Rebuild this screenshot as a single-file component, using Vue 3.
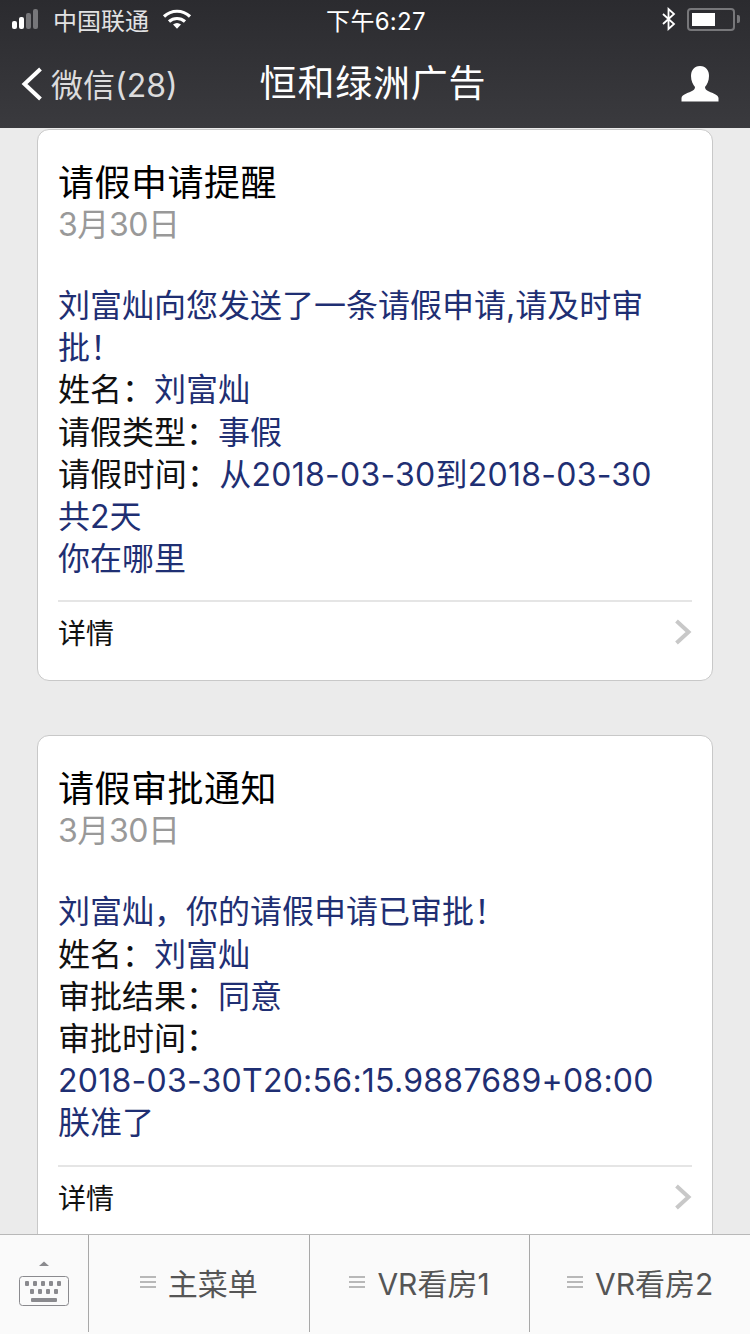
<template>
  <div class="page">
    <header class="topbar">
      <div class="status">
        <div class="status-left">
          <div class="signal">
            <i class="on"></i><i class="on"></i><i></i><i></i>
          </div>
          <span class="carrier">中国联通</span>
          <svg class="wifi" width="30" height="22" viewBox="0 0 30 22">
            <path d="M2 8.5C9.5 1.5 20.5 1.5 28 8.500" fill="none" stroke="#fff" stroke-width="3.200" />
            <path d="M7 13.500C11.500 9.500 18.500 9.500 23 13.500" fill="none" stroke="#fff" stroke-width="3.200" />
            <path d="M11 16.500C13.500 14.500 16.500 14.500 19 16.500L15 20.800Z" fill="#fff" />
          </svg>
        </div>
        <div class="clock">下午6:27</div>
        <div class="status-right">
          <svg width="16" height="24" viewBox="0 0 16 24">
            <path d="M2 7L13 17L7.500 22V2L13 7L2 17" fill="none" stroke="#fff" stroke-width="1.800" />
          </svg>
          <div class="battery"><div class="battery-level"></div></div>
          <div class="battery-cap"></div>
        </div>
      </div>
      <div class="navbar">
        <div class="back">
          <svg width="24" height="36" viewBox="0 0 24 36">
            <path d="M20.500 3L4.500 18L20.500 33" fill="none" stroke="#fff" stroke-width="4" />
          </svg>
          <span>微信(28)</span>
        </div>
        <div class="title">恒和绿洲广告</div>
        <svg class="person" width="38" height="36" viewBox="0 0 38 36">
          <path
            d="M19 0C25 0 28 4.500 28 10C28 15 26 18.500 24 21C24 23 25 24 28 25.500C32 27.500 37 28.500 37.500 32V35.500H0.500V32C1 28.500 6 27.500 10 25.500C13 24 14 23 14 21C12 18.500 10 15 10 10C10 4.500 13 0 19 0Z"
            fill="#fff"
          />
        </svg>
      </div>
    </header>

    <main class="feed">
      <article v-for="msg in messages" :key="msg.title" class="card">
        <h3 class="card-title">{{ msg.title }}</h3>
        <div class="card-date">{{ msg.date }}</div>
        <div class="card-body">
          <p v-for="(line, i) in msg.lines" :key="i" :class="{ numeric: line.numeric }">
            <span v-if="line.label" class="label">{{ line.label }}</span>{{ line.text }}
          </p>
        </div>
        <div class="card-link">
          <span>详情</span>
          <svg width="18" height="26" viewBox="0 0 18 26">
            <path d="M2.500 2L14.500 13L2.500 24" fill="none" stroke="#c8c8c8" stroke-width="4" />
          </svg>
        </div>
      </article>
    </main>

    <footer class="menu">
      <div class="keyboard-toggle">
        <svg width="52" height="46" viewBox="0 0 52 46">
          <path d="M21 5L26 0.500L31 5Z" fill="#8a8a8e" />
          <rect x="1.500" y="15.500" width="49" height="29" rx="3" fill="none" stroke="#8a8a8e" stroke-width="1" />
          <g fill="#8a8a8e">
            <rect v-for="x in [7, 15, 23, 31, 39]" :key="x" :x="x" y="20" width="4" height="5" rx="1" />
            <rect v-for="x in [12, 20, 28, 36]" :key="x" :x="x" y="28" width="4" height="5" rx="1" />
            <rect x="13" y="37" width="26" height="4" rx="1" />
          </g>
        </svg>
      </div>
      <div v-for="item in menu" :key="item" class="menu-item">
        <i class="menu-lines"></i>
        <span>{{ item }}</span>
      </div>
    </footer>
  </div>
</template>

<script setup>
const messages = [
  {
    title: "请假申请提醒",
    date: "3月30日",
    lines: [
      { text: "刘富灿向您发送了一条请假申请,请及时审批！" },
      { label: "姓名：", text: "刘富灿" },
      { label: "请假类型：", text: "事假" },
      { label: "请假时间：", text: "从2018-03-30到2018-03-30", numeric: true },
      { text: "共2天" },
      { text: "你在哪里" },
    ],
  },
  {
    title: "请假审批通知",
    date: "3月30日",
    lines: [
      { text: "刘富灿，你的请假申请已审批！" },
      { label: "姓名：", text: "刘富灿" },
      { label: "审批结果：", text: "同意" },
      { label: "审批时间：" },
      { text: "2018-03-30T20:56:15.9887689+08:00", numeric: true },
      { text: "朕准了" },
    ],
  },
];

const menu = ["主菜单", "VR看房1", "VR看房2"];
</script>

<style>
body {
  background: #ebebeb;
}
</style>

<style scoped>
.page {
  width: 750px;
  height: 1334px;
  display: flex;
  flex-direction: column;
  overflow: hidden;
  background: #ebebeb;
  font-family: Inter, "Noto Sans CJK SC", sans-serif;
}

.topbar {
  flex: none;
  height: 128px;
  background: linear-gradient(#2b2b2f, #3a3a3e);
  color: #fff;
}

.status {
  height: 40px;
  padding-bottom: 2px;
  box-sizing: border-box;
  display: flex;
  align-items: center;
  font-size: 24px;
}

.status-left {
  flex: 1;
  display: flex;
  align-items: center;
  padding-left: 12px;
}

.signal {
  display: flex;
  align-items: flex-end;
  gap: 2px;
  width: 34px;
  height: 20px;
}

.signal i {
  width: 5px;
  background: #77777a;
  border-radius: 2px;
  height: 20px;
}

.signal i:nth-child(1) {
  height: 8px;
}

.signal i:nth-child(2) {
  height: 12px;
}

.signal i:nth-child(3) {
  height: 16px;
}

.signal i.on {
  background: #fff;
}

.carrier {
  margin-left: 7px;
  color: #e2e2e3;
}

.wifi {
  margin-left: 13px;
}

.clock {
  flex: none;
  width: 100px;
  text-align: center;
  white-space: nowrap;
  font-size: 24px;
  letter-spacing: 0.3px;
}

.status-right {
  flex: 1;
  display: flex;
  align-items: center;
  justify-content: flex-end;
  padding-right: 10px;
}

.battery {
  width: 48px;
  height: 23px;
  margin-left: 10px;
  padding: 3px;
  box-sizing: border-box;
  border: 2px solid #77777a;
  border-radius: 4px;
}

.battery-level {
  width: 23px;
  height: 100%;
  background: #fff;
}

.battery-cap {
  width: 3px;
  height: 8px;
  margin-left: 2px;
  background: #77777a;
  border-radius: 0 2px 2px 0;
}

.navbar {
  position: relative;
  height: 88px;
  display: flex;
  align-items: center;
  justify-content: space-between;
  padding: 0 31px 0 20px;
}

.back {
  display: flex;
  align-items: center;
  gap: 7px;
  font-size: 32px;
  color: #dcdcdd;
}

.back span {
  margin-top: -2px;
}

.title {
  position: absolute;
  left: 0;
  right: 4px;
  padding-bottom: 7px;
  text-align: center;
  font-size: 37px;
  font-weight: 400;
  letter-spacing: 0.8px;
  pointer-events: none;
}

.feed {
  flex: 1;
  min-height: 0;
  overflow: hidden;
  display: flex;
  flex-direction: column;
  gap: 54px;
  padding: 1px 37px 0;
}

.card {
  flex: none;
  background: #fff;
  border: 1px solid #c8c8c8;
  border-radius: 12px;
  padding: 31px 20px 0;
}

.card-title {
  margin: 0;
  font-size: 36px;
  font-weight: 400;
  line-height: 44px;
  letter-spacing: 0.5px;
  color: #000;
}

.card-date {
  font-size: 32px;
  line-height: 40px;
  letter-spacing: -0.4px;
  color: #999;
}

.card-body {
  margin-top: 40px;
  font-size: 32px;
  line-height: 42.200px;
  color: #1f2f73;
}

.card-body p {
  margin: 0;
}

.card-body p.numeric {
  letter-spacing: 0.25px;
}

.label {
  color: #111;
}

.card-link {
  display: flex;
  align-items: center;
  justify-content: space-between;
  height: 80px;
  margin-top: 20px;
  padding-bottom: 18px;
  box-sizing: border-box;
  border-top: 2px solid #e5e5e5;
  font-size: 28px;
  color: #111;
}

.menu {
  flex: none;
  height: 100px;
  display: flex;
  box-sizing: border-box;
  border-top: 1px solid #b8b8b8;
  background: #fafafa;
  padding-bottom: 2px;
}

.keyboard-toggle {
  flex: none;
  width: 88px;
  display: flex;
  align-items: center;
  justify-content: center;
}

.menu-item {
  flex: 1;
  display: flex;
  align-items: center;
  justify-content: center;
  gap: 12px;
  padding-bottom: 4px;
  border-left: 1px solid #a8a8a8;
  font-size: 30px;
  color: #555;
}

.menu-lines {
  width: 16px;
  height: 12px;
  border-top: 2px solid #b8b8b8;
  border-bottom: 2px solid #b8b8b8;
  box-sizing: border-box;
  background: linear-gradient(#b8b8b8, #b8b8b8) center / 100% 2px no-repeat;
}
</style>
